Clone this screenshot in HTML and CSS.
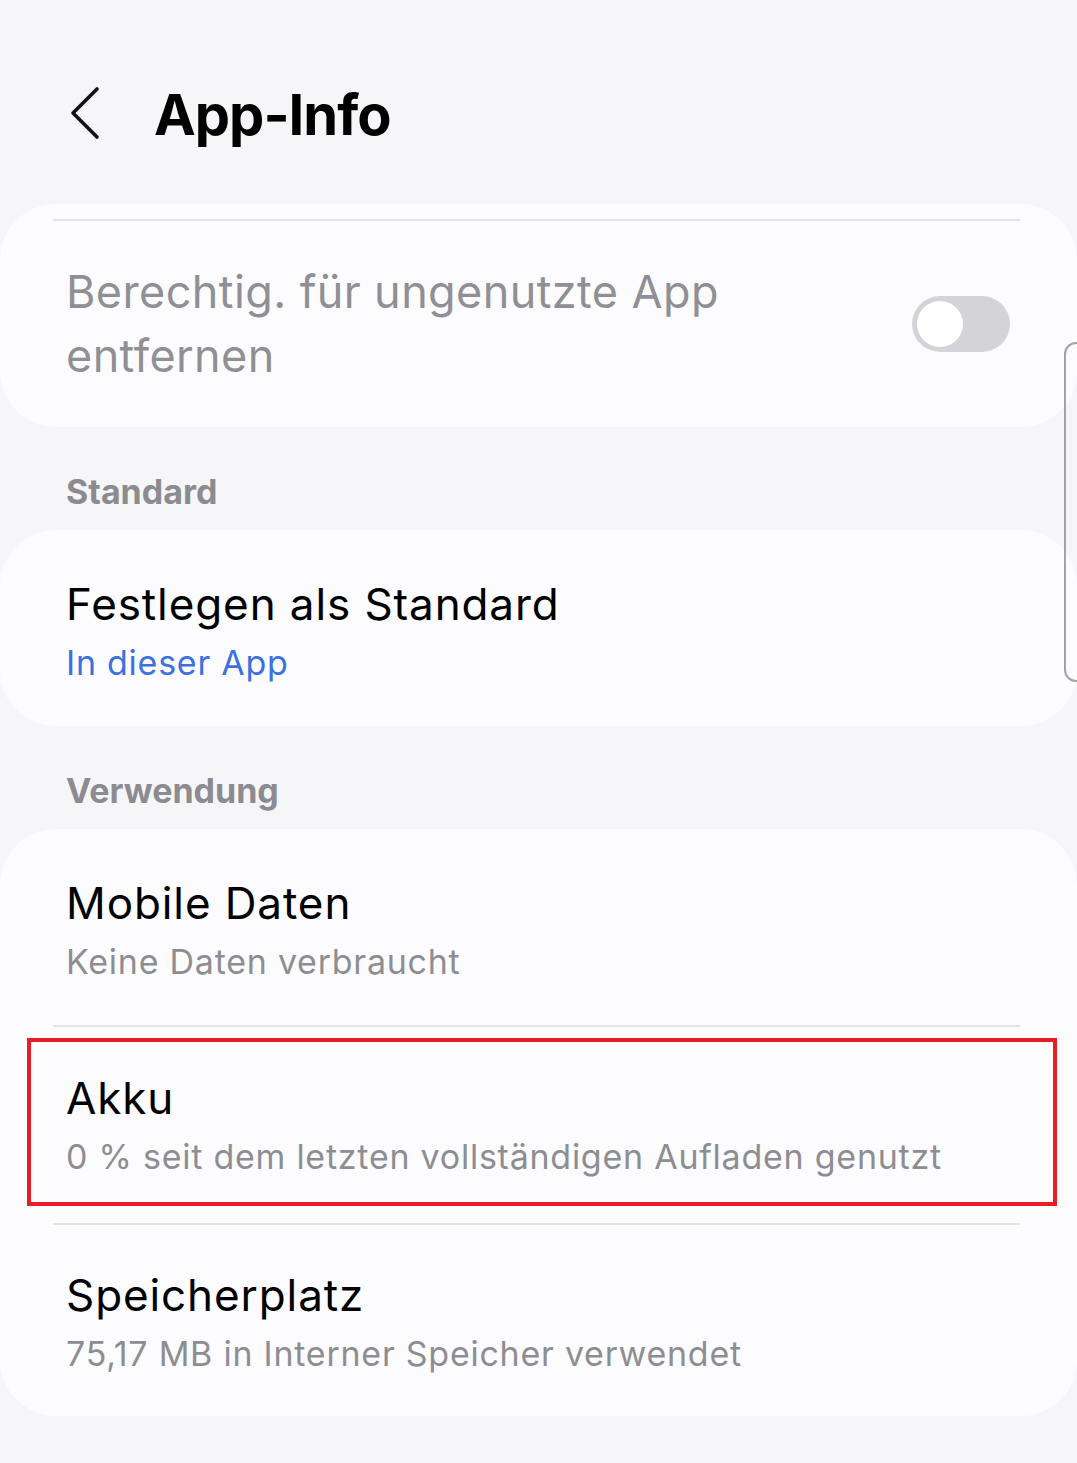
FILE: index.html
```html
<!DOCTYPE html>
<html lang="de">
<head>
	<meta charset="UTF-8">
	<title>App-Info</title>
	<link rel="stylesheet" href="styles.css">
</head>
<body>
	<header class="app-bar">
		<button class="back" type="button" aria-label="Zurück">
			<svg width="40" height="60" viewBox="0 0 40 60">
				<path d="M30 4 L6 28 L30 52" fill="none" stroke="#111" stroke-width="3.6" stroke-linecap="round" stroke-linejoin="round"/>
			</svg>
		</button>
		<h1>App-Info</h1>
	</header>

	<section class="card card-top">
		<div class="divider"></div>
		<div class="row row-switch">
			<span class="row-label muted">Berechtig. für ungenutzte App entfernen</span>
			<span class="switch"><span class="knob"></span></span>
		</div>
	</section>

	<h2 class="section-title">Standard</h2>
	<section class="card">
		<div class="row">
			<div class="row-title">Festlegen als Standard</div>
			<div class="row-sub accent">In dieser App</div>
		</div>
	</section>

	<h2 class="section-title">Verwendung</h2>
	<section class="card">
		<div class="row">
			<div class="row-title">Mobile Daten</div>
			<div class="row-sub">Keine Daten verbraucht</div>
		</div>
		<div class="divider"></div>
		<div class="row highlighted">
			<div class="row-title">Akku</div>
			<div class="row-sub">0 % seit dem letzten vollständigen Aufladen genutzt</div>
		</div>
		<div class="divider"></div>
		<div class="row row-last">
			<div class="row-title">Speicherplatz</div>
			<div class="row-sub">75,17 MB in Interner Speicher verwendet</div>
		</div>
	</section>

	<div class="scroll-thumb"></div>
</body>
</html>
```

FILE: styles.css
```css
body {
	font-family: "Inter", "Noto Sans", sans-serif;
	background-color: #f6f6f8;
	margin: 0;
	padding: 0;
	width: 1077px;
	height: 1463px;
	position: relative;
	overflow: hidden;
	color: #000;
}

/* Kopfzeile */
.app-bar {
	display: flex;
	align-items: center;
	height: 110px;
	padding-top: 60px;
}

.back {
	background: none;
	border: none;
	padding: 0;
	margin-left: 67px;
	width: 40px;
	height: 60px;
	display: flex;
}

.app-bar h1 {
	margin: 0 0 0 47px;
	font-size: 56px;
	font-weight: 700;
	letter-spacing: -1px;
}

/* Karten */
.card {
	background-color: #fcfcfe;
	border-radius: 56px;
	overflow: hidden;
}

.card-top {
	margin-top: 34px;
	padding-top: 15px;
}

.divider {
	height: 2px;
	background-color: #e3e3e6;
	margin: 0 57px 0 53px;
}

.row {
	position: relative;
	padding: 47px 66px 41px;
}

.row-switch {
	display: flex;
	align-items: center;
	justify-content: space-between;
	padding: 39px 67px 39px 66px;
}

.row-label {
	font-size: 45px;
	line-height: 64px;
	letter-spacing: 0.4px;
	max-width: 700px;
}

.muted {
	color: #909094;
}

.row-title {
	font-size: 44px;
	line-height: 54px;
	letter-spacing: 0.9px;
}

.row-sub {
	font-size: 34px;
	line-height: 44px;
	letter-spacing: 0.75px;
	margin-top: 10px;
	color: #8e8e92;
}

.accent {
	color: #3d71de;
}

.highlighted {
	padding-top: 44px;
	padding-bottom: 44px;
}

.row-last {
	padding-top: 43px;
	padding-bottom: 40px;
}

/* Schalter */
.switch {
	width: 98px;
	height: 56px;
	border-radius: 28px;
	background-color: #d4d4d8;
	display: flex;
	align-items: center;
	padding-left: 5px;
	box-sizing: border-box;
}

.knob {
	width: 46px;
	height: 46px;
	border-radius: 50%;
	background-color: #fff;
}

/* Abschnittstitel */
.section-title {
	margin: 45px 0 18px 66px;
	font-size: 34px;
	line-height: 40px;
	font-weight: 700;
	color: #8b8b90;
}

/* Markierung um Akku */
.highlighted::after {
	content: "";
	position: absolute;
	top: 11px;
	bottom: 17px;
	left: 27px;
	right: 20px;
	border: 4px solid #ec1c24;
}

/* Scroll-Anzeige */
.scroll-thumb {
	position: absolute;
	left: 1064px;
	top: 342px;
	width: 30px;
	height: 336px;
	border: 2px solid #a3a3a6;
	border-radius: 12px;
}
```
